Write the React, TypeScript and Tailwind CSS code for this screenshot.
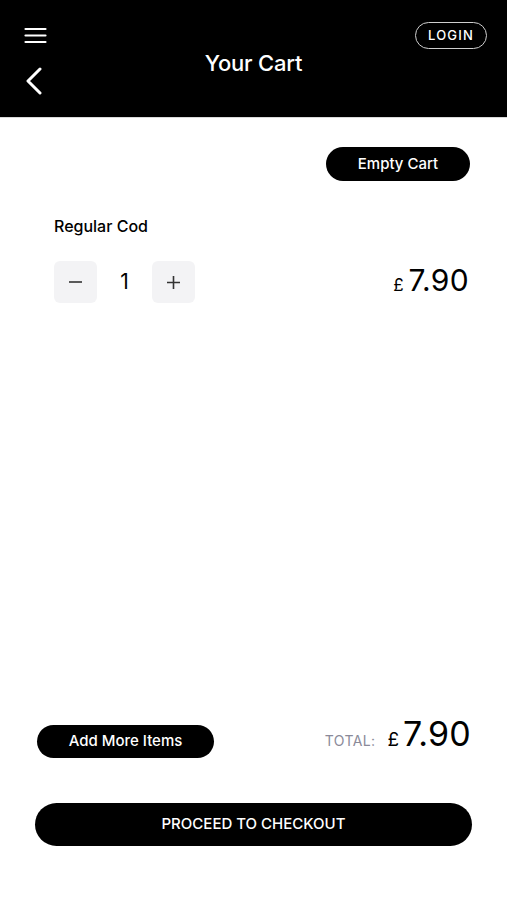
import { useState } from "react";

export default function App() {
  const [qty, setQty] = useState(1);
  const price = 7.9;
  const total = (price * qty).toFixed(2);

  return (
    <div className="flex h-[900px] w-full flex-col bg-white font-['Inter',sans-serif] text-black">
      {/* Header */}
      <header className="relative h-[118px] shrink-0 border-b border-[#d9d9d9] bg-black">
        <button className="absolute left-[24px] top-[27px] text-white">
          <svg width="23" height="17" viewBox="0 0 23 17" fill="none" stroke="currentColor" strokeWidth="2.2" strokeLinecap="round">
            <path d="M1.5 2h20M1.5 8.5h20M1.5 15h20" />
          </svg>
        </button>
        <button className="absolute left-[25px] top-[67px] text-white">
          <svg width="18" height="28" viewBox="0 0 18 28" fill="none" stroke="currentColor" strokeWidth="3" strokeLinecap="round" strokeLinejoin="round">
            <path d="M15 2 3 14l12 12" />
          </svg>
        </button>
        <h1 className="pt-[49px] text-center text-[22px] font-medium leading-[28px] tracking-[-0.2px] text-white">Your Cart</h1>
        <button className="absolute right-[20px] top-[22px] flex h-[27px] w-[72px] items-center justify-center rounded-full border-[1.5px] border-[#cfcfcf] text-[13px] font-medium tracking-[1.2px] text-white">
          LOGIN
        </button>
      </header>

      {/* Cart body */}
      <main className="flex flex-1 flex-col px-[54px] pt-[29px]">
        <div className="-mr-[17px] flex justify-end">
          <button className="flex h-[34px] w-[144px] items-center justify-center rounded-full bg-black text-[15px] font-medium text-white">
            Empty Cart
          </button>
        </div>

        <div className="mt-[35px] text-[16px] font-medium leading-[20px]">Regular Cod</div>

        <div className="-mr-[16px] mt-[25px] flex items-center justify-between">
          <div className="flex items-center">
            <button
              onClick={() => setQty((q) => Math.max(1, q - 1))}
              className="flex h-[42px] w-[43px] items-center justify-center rounded-md bg-[#f3f3f5]"
            >
              <svg width="13" height="2" viewBox="0 0 13 2"><path d="M0 1h13" stroke="#333" strokeWidth="1.6" /></svg>
            </button>
            <span className="w-[55px] text-center text-[21px]">{qty}</span>
            <button
              onClick={() => setQty((q) => q + 1)}
              className="flex h-[42px] w-[43px] items-center justify-center rounded-md bg-[#f3f3f5]"
            >
              <svg width="13" height="13" viewBox="0 0 13 13"><path d="M0 6.5h13M6.5 0v13" stroke="#333" strokeWidth="1.6" /></svg>
            </button>
          </div>
          <div className="flex items-baseline">
            <span className="mr-[5px] text-[17px]">£</span>
            <span className="text-[30px] leading-none tracking-[0.3px]">{total}</span>
          </div>
        </div>
      </main>

      {/* Footer actions */}
      <footer className="shrink-0 px-[35px] pb-[54px]">
        <div className="flex h-[33px] items-center justify-between pl-[2px] pr-[1px]">
          <button className="flex h-[33px] w-[177px] items-center justify-center rounded-full bg-black text-[15px] font-medium text-white">
            Add More Items
          </button>
          <div className="mb-[12px] flex items-baseline">
            <span className="mr-[12px] text-[14px] tracking-[0.4px] text-[#8a8a99]">TOTAL:</span>
            <span className="mr-[4px] text-[19px]">£</span>
            <span className="text-[34px] leading-none tracking-[0.2px]">{total}</span>
          </div>
        </div>
        <button className="mt-[45px] flex h-[43px] w-full items-center justify-center rounded-full bg-black text-[15px] font-medium text-white">
          PROCEED TO CHECKOUT
        </button>
      </footer>
    </div>
  );
}
